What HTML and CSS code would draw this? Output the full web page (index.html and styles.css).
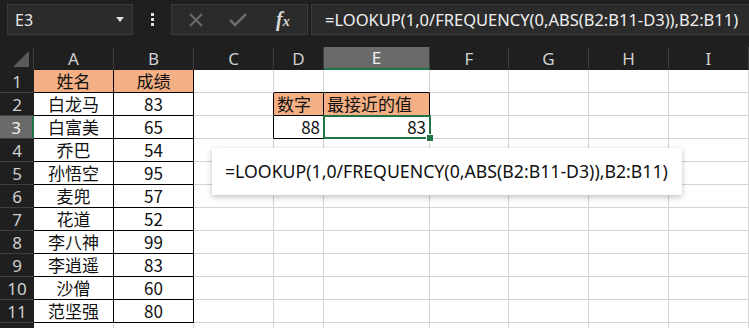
FILE: index.html
```html
<!DOCTYPE html>
<html lang="zh-CN">
<head>
  <meta charset="UTF-8" />
  <title>LOOKUP 最接近的值</title>
  <link rel="stylesheet" href="styles.css">
</head>
<body>
  <div class="bar">
    <div class="name-box">
      <span>E3</span>
      <span class="caret"></span>
    </div>
    <div class="dots"><i></i><i></i><i></i></div>
    <div class="buttons">
      <svg class="btn-x" width="16" height="16" viewBox="0 0 16 16"><path d="M2 2 L14 14 M14 2 L2 14" stroke="#6b6b6b" stroke-width="2"/></svg>
      <svg class="btn-ok" width="20" height="16" viewBox="0 0 20 16"><path d="M2 8 L7 13 L18 2" stroke="#6b6b6b" stroke-width="2.6" fill="none"/></svg>
      <span class="fx"><i>f</i><i class="x">x</i></span>
    </div>
    <div class="formula">=LOOKUP(1,0/FREQUENCY(0,ABS(B2:B11-D3)),B2:B11)</div>
  </div>

  <div class="sheet">
    <div class="hd corner"><span class="tri"></span></div>
    <div class="hd">A</div>
    <div class="hd">B</div>
    <div class="hd">C</div>
    <div class="hd">D</div>
    <div class="hd sel">E</div>
    <div class="hd">F</div>
    <div class="hd">G</div>
    <div class="hd">H</div>
    <div class="hd">I</div>

    <div class="rh">1</div>
    <div class="c t head">姓名</div>
    <div class="c t head">成绩</div>
    <div class="c"></div>
    <div class="c bb"></div>
    <div class="c bb"></div>
    <div class="c"></div>
    <div class="c"></div>
    <div class="c"></div>
    <div class="c"></div>

    <div class="rh">2</div>
    <div class="c t">白龙马</div>
    <div class="c t">83</div>
    <div class="c br"></div>
    <div class="c t head left">数字</div>
    <div class="c t head left">最接近的值</div>
    <div class="c"></div>
    <div class="c"></div>
    <div class="c"></div>
    <div class="c"></div>

    <div class="rh sel">3</div>
    <div class="c t">白富美</div>
    <div class="c t">65</div>
    <div class="c br"></div>
    <div class="c t right">88</div>
    <div class="c t right active">83</div>
    <div class="c"></div>
    <div class="c"></div>
    <div class="c"></div>
    <div class="c"></div>

    <div class="rh">4</div>
    <div class="c t">乔巴</div>
    <div class="c t">54</div>
    <div class="c"></div>
    <div class="c"></div>
    <div class="c"></div>
    <div class="c"></div>
    <div class="c"></div>
    <div class="c"></div>
    <div class="c"></div>

    <div class="rh">5</div>
    <div class="c t">孙悟空</div>
    <div class="c t">95</div>
    <div class="c"></div>
    <div class="c"></div>
    <div class="c"></div>
    <div class="c"></div>
    <div class="c"></div>
    <div class="c"></div>
    <div class="c"></div>

    <div class="rh">6</div>
    <div class="c t">麦兜</div>
    <div class="c t">57</div>
    <div class="c"></div>
    <div class="c"></div>
    <div class="c"></div>
    <div class="c"></div>
    <div class="c"></div>
    <div class="c"></div>
    <div class="c"></div>

    <div class="rh">7</div>
    <div class="c t">花道</div>
    <div class="c t">52</div>
    <div class="c"></div>
    <div class="c"></div>
    <div class="c"></div>
    <div class="c"></div>
    <div class="c"></div>
    <div class="c"></div>
    <div class="c"></div>

    <div class="rh">8</div>
    <div class="c t">李八神</div>
    <div class="c t">99</div>
    <div class="c"></div>
    <div class="c"></div>
    <div class="c"></div>
    <div class="c"></div>
    <div class="c"></div>
    <div class="c"></div>
    <div class="c"></div>

    <div class="rh">9</div>
    <div class="c t">李逍遥</div>
    <div class="c t">83</div>
    <div class="c"></div>
    <div class="c"></div>
    <div class="c"></div>
    <div class="c"></div>
    <div class="c"></div>
    <div class="c"></div>
    <div class="c"></div>

    <div class="rh">10</div>
    <div class="c t">沙僧</div>
    <div class="c t">60</div>
    <div class="c"></div>
    <div class="c"></div>
    <div class="c"></div>
    <div class="c"></div>
    <div class="c"></div>
    <div class="c"></div>
    <div class="c"></div>

    <div class="rh">11</div>
    <div class="c t">范坚强</div>
    <div class="c t">80</div>
    <div class="c"></div>
    <div class="c"></div>
    <div class="c"></div>
    <div class="c"></div>
    <div class="c"></div>
    <div class="c"></div>
    <div class="c"></div>

    <div class="rh"></div>
    <div class="c"></div>
    <div class="c"></div>
    <div class="c"></div>
    <div class="c"></div>
    <div class="c"></div>
    <div class="c"></div>
    <div class="c"></div>
    <div class="c"></div>
    <div class="c"></div>

    <div class="callout">=LOOKUP(1,0/FREQUENCY(0,ABS(B2:B11-D3)),B2:B11)</div>
  </div>
</body>
</html>
```

FILE: styles.css
```css
* {
  box-sizing: border-box;
  margin: 0;
  padding: 0;
}

body {
  width: 749px;
  height: 328px;
  overflow: hidden;
  background: #1f1f1f;
  font-family: "Noto Sans", "Noto Sans CJK SC", sans-serif;
}

/* formula bar */
.bar {
  height: 47px;
  display: flex;
  align-items: flex-start;
  padding-top: 4px;
}

.name-box {
  width: 126px;
  height: 31px;
  margin-left: 7px;
  background: #2b2b2b;
  border: 1px solid #3a3a3a;
  color: #e6e6e6;
  font-size: 16px;
  display: flex;
  align-items: center;
  justify-content: space-between;
  padding: 0 8px 0 7px;
}

.caret {
  width: 0;
  height: 0;
  border-left: 4px solid transparent;
  border-right: 4px solid transparent;
  border-top: 5px solid #e0e0e0;
}

.dots {
  width: 38px;
  height: 31px;
  display: flex;
  flex-direction: column;
  align-items: center;
  justify-content: center;
  gap: 2px;
}

.dots i {
  width: 3px;
  height: 3px;
  background: #e0e0e0;
}

.buttons {
  width: 137px;
  height: 31px;
  background: #2b2b2b;
  border: 1px solid #3a3a3a;
  display: flex;
  align-items: center;
  padding-left: 16px;
}

.btn-ok {
  margin-left: 24px;
}

.fx {
  margin-left: 28px;
  color: #d8d8d8;
  font-family: "Liberation Serif", serif;
  font-size: 20px;
  font-weight: bold;
  font-style: italic;
}

.fx .x {
  font-size: 14px;
}

.formula {
  flex: 1;
  height: 31px;
  margin-left: 3px;
  background: #2b2b2b;
  border: 1px solid #3a3a3a;
  border-right: none;
  color: #f0f0f0;
  font-size: 16.5px;
  line-height: 29px;
  padding-left: 13px;
  white-space: nowrap;
}

/* sheet */
.sheet {
  position: relative;
  display: grid;
  grid-template-columns: 34px 80px 80px 80px 50px 106px 79px 80px 80px 80px;
  grid-template-rows: 23px;
  grid-auto-rows: 23px;
  background: #fff;
}

.hd {
  background: #1f1f1f;
  color: #cfcfcf;
  font-size: 17px;
  text-align: center;
  line-height: 23px;
  border-right: 1px solid #3e3e3e;
}

.hd.sel {
  background: #6a6a6a;
  color: #f2f2f2;
  border-bottom: 2px solid #217346;
  line-height: 22px;
}

.corner {
  display: flex;
  align-items: flex-end;
  justify-content: flex-end;
  padding: 0 4px 3px 0;
}

.tri {
  width: 0;
  height: 0;
  border-left: 16px solid transparent;
  border-bottom: 16px solid #5a5a5a;
}

.rh {
  background: #1f1f1f;
  color: #cfcfcf;
  font-size: 17px;
  text-align: center;
  line-height: 23px;
  border-bottom: 1px solid #3e3e3e;
}

.rh.sel {
  background: #6a6a6a;
  color: #f2f2f2;
  border-right: 2px solid #217346;
}

.c {
  border-right: 1px solid #d4d4d4;
  border-bottom: 1px solid #d4d4d4;
  font-family: "Noto Sans CJK SC", sans-serif;
  font-size: 17px;
  line-height: 22px;
  color: #111;
  white-space: nowrap;
}

.c.t {
  border-right-color: #000;
  border-bottom-color: #000;
  text-align: center;
}

.c.bb {
  border-bottom-color: #000;
}

.c.br {
  border-right-color: #000;
}

.head {
  background: #f4b084;
}

.left {
  text-align: left !important;
  padding-left: 3px;
}

.right {
  text-align: right !important;
  padding-right: 3px;
}

.active {
  position: relative;
}

.active::before {
  content: "";
  position: absolute;
  inset: -1px -2px -1px -1px;
  border: 2px solid #217346;
}

.active::after {
  content: "";
  position: absolute;
  right: -5px;
  bottom: -4px;
  width: 6px;
  height: 6px;
  background: #217346;
  border: 1px solid #fff;
}

.callout {
  position: absolute;
  left: 212px;
  top: 101px;
  width: 470px;
  height: 47px;
  background: #fff;
  box-shadow: 0 2px 6px rgba(0, 0, 0, 0.25);
  font-size: 17.7px;
  line-height: 47px;
  padding-left: 13px;
  color: #111;
  white-space: nowrap;
}
```
